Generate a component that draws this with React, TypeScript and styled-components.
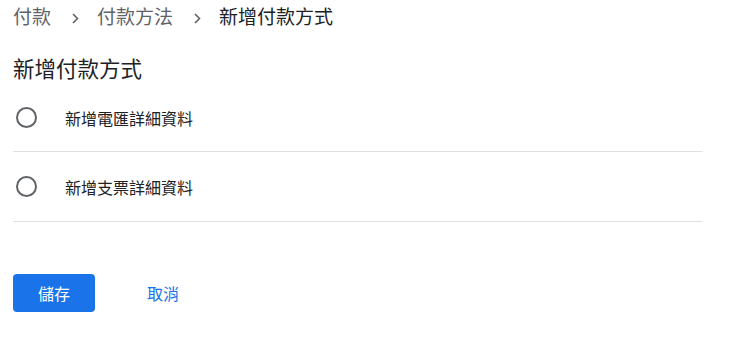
import React from "react";
import styled, { createGlobalStyle } from "styled-components";

const Global = createGlobalStyle`
  html, body { margin: 0; padding: 0; background: #fff; }
  body { font-family: Roboto, "Noto Sans CJK TC", "Noto Sans CJK SC", sans-serif; }
`;

const Page = styled.div`
  padding: 0 13px;
  width: 689px;
`;

const Breadcrumb = styled.nav`
  display: flex;
  align-items: center;
  height: 36px;
  font-size: 19px;
  color: #5f6368;
`;

const Crumb = styled.span<{ $current?: boolean }>`
  color: ${(p) => (p.$current ? "#202124" : "#5f6368")};
  line-height: 36px;
`;

const Sep = styled.span`
  display: flex;
  align-items: center;
  margin: 0 18px 0 21px;
`;

const Title = styled.h1`
  margin: 18px 0 0;
  font-size: 21.5px;
  font-weight: 400;
  color: #202124;
  line-height: 32px;
`;

const List = styled.div`
  display: flex;
  flex-direction: column;
  margin-top: -2px;
`;

const Row = styled.label`
  display: flex;
  align-items: center;
  height: 69px;
  border-bottom: 1px solid #e0e0e0;
  &:first-child { height: 67px; }
`;

const Radio = styled.span`
  box-sizing: border-box;
  width: 21px;
  height: 21px;
  border: 2px solid #5f6368;
  border-radius: 50%;
  margin-left: 3px;
  margin-right: 28px;
  flex: none;
`;

const RowText = styled.span`
  font-size: 16px;
  color: #202124;
`;

const Actions = styled.div`
  display: flex;
  align-items: center;
  margin-top: 52px;
`;

const Primary = styled.button`
  width: 82px;
  height: 38px;
  border: none;
  border-radius: 4px;
  background: #1a73e8;
  color: #fff;
  font-size: 16px;
  font-family: inherit;
  padding: 0;
`;

const TextButton = styled.button`
  border: none;
  background: none;
  color: #1a73e8;
  font-size: 16px;
  font-family: inherit;
  padding: 0;
  margin-left: 52px;
`;

const Chevron = () => (
  <svg width="7" height="11" viewBox="0 0 7 11">
    <path d="M1 1l4.5 4.5L1 10" fill="none" stroke="#5f6368" strokeWidth="1.6" />
  </svg>
);

export default function App() {
  return (
    <>
      <Global />
      <Page>
        <Breadcrumb>
          <Crumb>付款</Crumb>
          <Sep><Chevron /></Sep>
          <Crumb>付款方法</Crumb>
          <Sep><Chevron /></Sep>
          <Crumb $current>新增付款方式</Crumb>
        </Breadcrumb>
        <Title>新增付款方式</Title>
        <List>
          <Row>
            <Radio />
            <RowText>新增電匯詳細資料</RowText>
          </Row>
          <Row>
            <Radio />
            <RowText>新增支票詳細資料</RowText>
          </Row>
        </List>
        <Actions>
          <Primary>儲存</Primary>
          <TextButton>取消</TextButton>
        </Actions>
      </Page>
    </>
  );
}
